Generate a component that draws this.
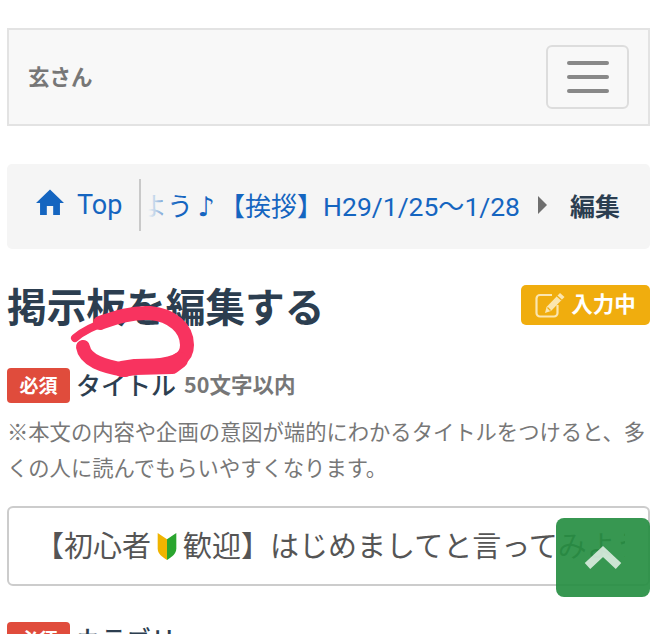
<div class="page">
  <nav class="navbar">
    <span class="brand">玄さん</span>
    <button class="toggle" aria-label="menu"><i></i><i></i><i></i></button>
  </nav>

  <div class="crumbs">
    <a class="home">
      <svg width="28" height="27" viewBox="0 0 29 27"><path fill="#1565c0" d="M14.5 0 L29 14 H24.8 V26.5 H17.8 V17 H11.2 V26.5 H4.2 V14 H0 Z"/></svg>
      <span>Top</span>
    </a>
    <div class="scroller">
      <span class="scrolltext">しよう<span class="note">♪</span>【挨拶】<span class="latin">H29/1/25</span>～<span class="latin">1/28</span></span>
      <span class="fade"></span>
    </div>
    <svg class="arrow" width="9" height="18" viewBox="0 0 9 18"><path fill="#6f6f6f" d="M0 0 L9 9 L0 18 Z"/></svg>
    <strong>編集</strong>
  </div>

  <div class="titlerow">
    <h1>掲示板を編集する</h1>
    <span class="status">
      <svg width="30" height="26" viewBox="0 0 30 26" fill="none" stroke="#fbe6b0" stroke-width="2.2"><path d="M17 3 H5 a3.5 3.5 0 0 0 -3.5 3.5 V21 a3.5 3.5 0 0 0 3.5 3.5 H19 a3.5 3.5 0 0 0 3.5 -3.5 V13"/><path fill="#fbe6b0" stroke="none" d="M25 1 L29.5 5 L16 19 L10 21 L11.5 15 Z"/><path stroke="#f0ad0e" stroke-width="1.2" d="M22 4 L26.5 8 M12.5 15.5 L15.5 18.5"/></svg>
      <span class="statustext">入力中</span>
    </span>
  </div>

  <div class="label">
    <span class="req"><span>必須</span></span><span class="name">タイトル</span><span class="limit">50文字以内</span>
  </div>
  <p class="help">※本文の内容や企画の意図が端的にわかるタイトルをつけると、多くの人に読んでもらいやすくなります。</p>

  <div class="input">
    <span class="inputtext">【初心者<svg class="mark" width="22" height="29" viewBox="0 0 20 28"><path fill="#f0b400" d="M1 1 L10 7 V27 C5 24 1 21 1 16 Z"/><path fill="#2aa52f" d="M19 1 L10 7 V27 C15 24 19 21 19 16 Z"/></svg>歓迎】はじめましてと言ってみよう</span>
  </div>

  <div class="label second">
    <span class="req"><span>必須</span></span><span class="name">カテゴリ</span>
  </div>

  <svg class="scribble" width="130" height="80" viewBox="70 304 130 80" fill="none" stroke="#f8335f" stroke-linecap="round" stroke-linejoin="round">
    <path stroke-width="8" d="M75 338 C83 331 93 326 108 321"/>
    <path stroke-width="14" d="M100 323 C112 319 130 312 150 313 C172 315 187 328 187 345 C187 358 178 363 155 366"/>
    <path stroke-width="14" d="M83 347 C85 360 102 366 125 370"/>
    <path stroke-width="16" d="M122 369 L135 367 L172 366 L180 360"/>
  </svg>

  <button class="top" aria-label="top">
    <svg width="38" height="24" viewBox="0 0 38 24" fill="none" stroke="#ffffff" stroke-opacity=".75" stroke-width="8"><path d="M3.5 20 L19 5.5 L34.5 20"/></svg>
  </button>
</div>

<style>
  :global(body) { margin: 0; background: #fff; }
  .page {
    position: relative;
    box-sizing: border-box;
    width: 669px;
    height: 634px;
    overflow: hidden;
    padding: 28px 19px 0 7px;
    font-family: "Noto Sans CJK JP", "Noto Sans", sans-serif;
    color: #2c3e50;
  }
  .navbar {
    box-sizing: border-box;
    height: 98px;
    display: flex;
    align-items: center;
    justify-content: space-between;
    padding: 0 19px;
    background: #f8f8f8;
    border: 2px solid #e3e3e3;
  }
  .brand { font-size: 21.5px; font-weight: 700; color: #777; padding-bottom: 3px; }
  .toggle {
    box-sizing: border-box;
    width: 83px;
    height: 64px;
    padding: 0;
    background: transparent;
    border: 2px solid #ddd;
    border-radius: 6px;
    display: flex;
    flex-direction: column;
    align-items: center;
    justify-content: center;
    gap: 10px;
  }
  .toggle i { display: block; width: 42px; height: 4px; border-radius: 2px; background: #888; }
  .crumbs {
    box-sizing: border-box;
    margin-top: 38px;
    height: 85px;
    display: flex;
    align-items: center;
    background: #f5f5f5;
    border-radius: 5px;
    padding: 0 0 4px 29px;
  }
  .home {
    display: flex;
    align-items: center;
    gap: 13px;
    color: #1565c0;
    font: 400 27px Roboto, sans-serif;
    width: 103px;
    flex: none;
  }
  .home svg { margin-top: -5px; }
  .scroller {
    position: relative;
    width: 385px;
    height: 52px;
    flex: none;
    border-left: 2px solid #c9c9c9;
    display: flex;
    justify-content: flex-end;
    align-items: center;
    overflow: hidden;
    white-space: nowrap;
    font-size: 26px;
    color: #1565c0;
    box-sizing: border-box;
    padding-right: 4px;
  }
  .scrolltext { flex: none; }
  .note {
    display: inline-block;
    width: 26px;
    text-align: center;
    font-family: "DejaVu Sans", sans-serif;
    font-size: 27px;
    line-height: 1;
  }
  .latin { font-family: Roboto, sans-serif; font-size: 26.5px; }
  .fade {
    position: absolute;
    left: 0; top: 0; bottom: 0;
    width: 36px;
    background: linear-gradient(to right, #f5f5f5 20%, rgba(245,245,245,0));
  }
  .arrow { margin-left: 14px; flex: none; }
  .crumbs strong { margin-left: 23px; font-size: 25px; font-weight: 700; color: #2c3e50; white-space: nowrap; }
  .titlerow {
    margin-top: 36px;
    height: 40px;
    display: flex;
    align-items: center;
    justify-content: space-between;
  }
  h1 { margin: 0; font-size: 39.7px; font-weight: 700; line-height: 44px; color: #2c3e50; }
  .status {
    box-sizing: border-box;
    width: 129px;
    height: 40px;
    display: flex;
    align-items: center;
    justify-content: center;
    gap: 6px;
    background: #f0ad0e;
    border-radius: 5px;
    color: #fff;
    font-size: 21.5px;
    font-weight: 700;
  }
  .statustext { padding-bottom: 5px; }
  .label {
    margin-top: 43px;
    height: 35px;
    display: flex;
    align-items: center;
  }
  .req {
    width: 63px;
    height: 35px;
    display: flex;
    align-items: center;
    justify-content: center;
    background: #e04c3c;
    border-radius: 4px;
    color: #fff;
    font-size: 19px;
    font-weight: 700;
    flex: none;
  }
  .req span { padding-bottom: 2px; }
  .name { margin-left: 6px; font-size: 25px; font-weight: 500; color: #2c3e50; padding-bottom: 4px; }
  .limit { margin-left: 8px; font-size: 21.5px; font-weight: 700; color: #777; padding-bottom: 4px; }
  .help {
    margin: 10px 0 0;
    font-size: 21.3px;
    line-height: 36px;
    color: #777;
  }
  .input {
    box-sizing: border-box;
    margin-top: 21px;
    height: 80px;
    border: 2px solid #ccc;
    border-radius: 6px;
    display: flex;
    align-items: center;
    padding: 0 23px 5px 26px;
    overflow: hidden;
    background: #fff;
  }
  .inputtext {
    font-size: 29px;
    color: #555;
    white-space: nowrap;
    display: block;
    min-width: 0;
    overflow: hidden;
  }
  .mark { vertical-align: -4px; margin: 0 5px; }
  .second { margin-top: 36px; }
  .scribble { position: absolute; left: 70px; top: 304px; }
  .top {
    position: absolute;
    left: 556px;
    top: 518px;
    width: 94px;
    height: 79px;
    padding: 0;
    border: 0;
    border-radius: 8px;
    background: rgba(38, 142, 66, 0.92);
    display: flex;
    align-items: center;
    justify-content: center;
  }
</style>
